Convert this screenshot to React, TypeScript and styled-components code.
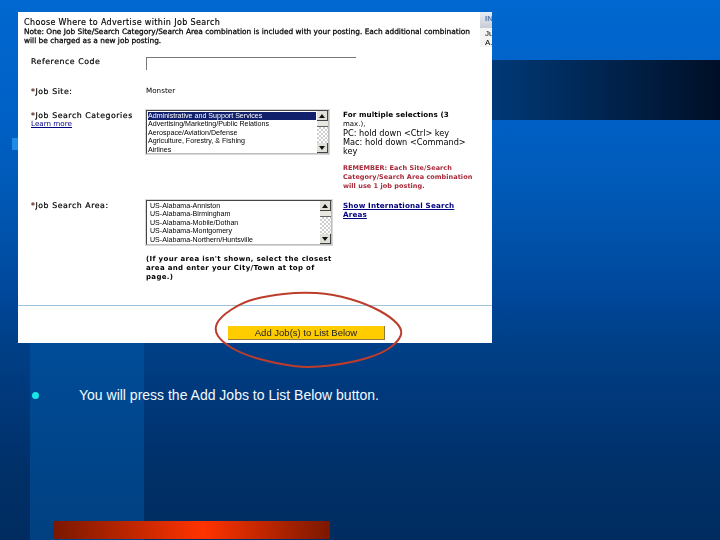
import React from "react";
import styled, { createGlobalStyle } from "styled-components";

const Global = createGlobalStyle`
  html, body { margin: 0; padding: 0; background: #003a78; }
`;

const Slide = styled.div`
  position: relative;
  width: 720px;
  height: 540px;
  overflow: hidden;
  padding: 12px 0 0 18px;
  box-sizing: border-box;
  background: linear-gradient(180deg, #0068d0 0%, #0060c6 22%, #0058b4 37%, #00479a 55%, #004088 63%, #00387a 74%, #003068 87%, #002c60 100%);
  font-family: "Liberation Sans", Arial, sans-serif;
`;

const Column = styled.div`
  position: absolute;
  left: 30px;
  top: 200px;
  bottom: 0;
  width: 114px;
  background: linear-gradient(180deg, #0056ac 0%, #004c98 42%, #004080 100%);
`;

const Band = styled.div`
  position: absolute;
  left: 144px;
  right: 0;
  top: 60px;
  height: 60px;
  background: linear-gradient(90deg, #0058b0 0%, #003a78 60%, #000f26 100%);
`;

const Square = styled.div`
  position: absolute;
  left: 12px;
  top: 138px;
  width: 8px;
  height: 12px;
  background: #1c8ce6;
`;

const Panel = styled.div`
  position: relative;
  width: 474px;
  height: 331px;
  background: #fff;
  overflow: hidden;
  color: #000;
  font-family: "DejaVu Sans", Verdana, sans-serif;
  font-size: 7.6px;
  line-height: 9px;
  filter: blur(0.35px);
`;

const Header = styled.div`
  height: 44px;
  box-sizing: border-box;
  padding: 6px 6px 0 6px;
`;

const Title = styled.div`
  font-size: 8px;
  letter-spacing: 0.36px;
  -webkit-text-stroke: 0.15px #000;
  white-space: nowrap;
`;

const Note = styled.div`
  font-size: 7.4px;
  -webkit-text-stroke: 0.25px #000;
  white-space: nowrap;
`;

const Row = styled.div<{ $height: number }>`
  display: grid;
  grid-template-columns: 128px 197px 1fr;
  height: ${(p) => p.$height}px;
`;

const Label = styled.div`
  padding: 1px 0 0 13px;
  font-size: 7.8px;
  letter-spacing: 0.55px;
  -webkit-text-stroke: 0.2px #000;
  white-space: nowrap;
`;

const Star = styled.span`
  color: #b01818;
`;

const Anchor = styled.span`
  color: #000080;
  text-decoration: underline;
  -webkit-text-stroke: 0;
`;

const LearnLink = styled(Anchor)`
  font-size: 7.2px;
  letter-spacing: 0;
  position: relative;
  top: -1px;
`;

const BlockLink = styled(Anchor)`
  display: block;
  align-self: start;
  width: 118px;
  padding-top: 1px;
  font-weight: 700;
  font-size: 7.2px;
  letter-spacing: 0.15px;
`;

const TextInput = styled.div`
  width: 210px;
  height: 13px;
  margin-top: 1px;
  box-sizing: border-box;
  border-top: 1px solid #777;
  border-left: 1px solid #777;
`;

const Plain = styled.div`
  font-size: 7.2px;
`;

const ListBox = styled.div<{ $width: number; $height: number }>`
  display: flex;
  width: ${(p) => p.$width}px;
  height: ${(p) => p.$height}px;
  box-sizing: border-box;
  border: 1px solid #bdbdbd;
  border-top-color: #444;
  border-left-color: #444;
  box-shadow: 0 0 0 1px #d8d8d8;
`;

const Options = styled.div<{ $inset: number }>`
  flex: 1;
  min-width: 0;
  overflow: hidden;
  padding: 1px 0 0 ${(p) => p.$inset}px;
`;

const Option = styled.div<{ $selected?: boolean }>`
  height: 8.4px;
  line-height: 8.4px;
  font-family: "Liberation Sans", Arial, sans-serif;
  font-size: 7.1px;
  white-space: nowrap;
  background: ${(p) => (p.$selected ? "#10206a" : "transparent")};
  color: ${(p) => (p.$selected ? "#fff" : "#000")};
  margin-right: 1px;
`;

const ScrollBar = styled.div`
  display: flex;
  flex-direction: column;
  width: 11px;
  background: repeating-conic-gradient(#cfcfcf 0 25%, #fff 0 50%) 0 0 / 4px 4px;
`;

const ScrollButton = styled.div`
  display: flex;
  align-items: center;
  justify-content: center;
  height: 10px;
  flex: none;
  box-sizing: border-box;
  background: #e0e0d8;
  border-right: 1px solid #444;
  border-bottom: 1px solid #444;
  svg { display: block; }
`;

const Thumb = styled.div`
  height: 6px;
  flex: none;
  box-sizing: border-box;
  background: #e8e8e0;
  border-bottom: 1px solid #666;
`;

const Spacer = styled.div`
  flex: 1;
`;

const Hint = styled.div`
  margin-top: 10px;
  width: 195px;
  font-weight: 700;
  font-size: 7px;
  letter-spacing: 0.33px;
  white-space: nowrap;
`;

const Side = styled.div`
  font-size: 8.2px;
  width: 131px;
`;

const SideTitle = styled.span`
  font-weight: 700;
  font-size: 7.2px;
  letter-spacing: 0.1px;
`;

const Small = styled.span`
  font-size: 7px;
`;

const Reminder = styled.div`
  margin-top: 8px;
  color: #a82a3a;
  font-weight: 700;
  font-size: 6.5px;
  letter-spacing: 0.05px;
`;

const Divider = styled.div`
  height: 1px;
  margin-top: 12px;
  background: #9cc4dc;
`;

const ButtonRow = styled.div`
  padding: 20px 0 0 210px;
`;

const AddButton = styled.div`
  width: 157px;
  height: 14px;
  box-sizing: border-box;
  background: #ffcc00;
  border-right: 1px solid #8a7a40;
  border-bottom: 1px solid #8a7a40;
  text-align: center;
  font-family: "Liberation Sans", Arial, sans-serif;
  font-size: 9.5px;
  line-height: 13px;
  color: #222;
`;

const Sliver = styled.div`
  position: absolute;
  right: 0;
  top: 0;
  width: 12px;
  height: 35px;
  background: #f4f4f4;
  font-family: "Liberation Sans", Arial, sans-serif;
  font-size: 8px;
  overflow: hidden;
  white-space: nowrap;
`;

const SliverHead = styled.div`
  height: 16px;
  margin-bottom: 1px;
  padding-left: 5px;
  line-height: 14px;
  font-size: 8px;
  font-weight: 700;
  color: #5a78b0;
  background: linear-gradient(180deg, #e8ecf4, #c8ccd4);
`;

const SliverLine = styled.div`
  padding-left: 5px;
  line-height: 9px;
`;

const Circle = styled.svg`
  position: absolute;
  left: 212px;
  top: 290px;
  width: 196px;
  height: 80px;
`;

const Bullet = styled.div`
  display: flex;
  align-items: center;
  height: 16px;
  margin: 44px 0 0 14px;
  position: relative;
  color: #f4faff;
  font-size: 14px;
`;

const Dot = styled.span`
  width: 7px;
  height: 7px;
  border-radius: 50%;
  background: #19e6e6;
  margin-right: 40px;
  flex: none;
`;

const RedBar = styled.div`
  position: relative;
  width: 276px;
  height: 18px;
  margin: 118px 0 0 36px;
  background: linear-gradient(90deg, #7a1800 0%, #ff3300 54%, #7a1800 100%);
`;

const Arrow = ({ down }: { down?: boolean }) => (
  <svg width="6" height="4" viewBox="0 0 6 4">
    <path d={down ? "M0 0H6L3 4Z" : "M0 4H6L3 0Z"} fill="#111" />
  </svg>
);

const Scroller = () => (
  <ScrollBar>
    <ScrollButton><Arrow /></ScrollButton>
    <Thumb />
    <Spacer />
    <ScrollButton><Arrow down /></ScrollButton>
  </ScrollBar>
);

const categories = [
  "Administrative and Support Services",
  "Advertising/Marketing/Public Relations",
  "Aerospace/Aviation/Defense",
  "Agriculture, Forestry, & Fishing",
  "Airlines",
];

const areas = [
  "US-Alabama-Anniston",
  "US-Alabama-Birmingham",
  "US-Alabama-Mobile/Dothan",
  "US-Alabama-Montgomery",
  "US-Alabama-Northern/Huntsville",
];

const ringPoints: [number, number][] = [
  [8, 27], [31, 12], [55, 6], [88, 2], [121, 4], [155, 14], [179, 27], [191, 40],
  [186, 52], [169, 64], [138, 73], [98, 78], [65, 74], [30, 64], [10, 52], [2, 40],
];

const ringPath = () => {
  const mid = (a: [number, number], b: [number, number]) =>
    `${(a[0] + b[0]) / 2} ${(a[1] + b[1]) / 2}`;
  const n = ringPoints.length;
  let d = `M${mid(ringPoints[n - 1], ringPoints[0])}`;
  ringPoints.forEach((p, i) => {
    d += ` Q${p[0]} ${p[1]} ${mid(p, ringPoints[(i + 1) % n])}`;
  });
  return d + "Z";
};

export default function App() {
  return (
    <>
      <Global />
      <Slide>
        <Column />
        <Band />
        <Square />
        <Panel>
          <Header>
            <Title>Choose Where to Advertise within Job Search</Title>
            <Note>
              Note: One Job Site/Search Category/Search Area combination is included with your posting. Each additional combination
              <br />
              will be charged as a new job posting.
            </Note>
          </Header>
          <Row $height={30}>
            <Label>Reference Code</Label>
            <TextInput />
            <div />
          </Row>
          <Row $height={24}>
            <Label><Star>*</Star>Job Site:</Label>
            <Plain>Monster</Plain>
            <div />
          </Row>
          <Row $height={90}>
            <Label>
              <Star>*</Star>Job Search Categories
              <br />
              <LearnLink>Learn more</LearnLink>
            </Label>
            <div>
              <ListBox $width={183} $height={44}>
                <Options $inset={1}>
                  {categories.map((c, i) => (
                    <Option key={c} $selected={i === 0}>{c}</Option>
                  ))}
                </Options>
                <Scroller />
              </ListBox>
            </div>
            <Side>
              <SideTitle>For multiple selections (3</SideTitle>
              <br />
              <Small>max.),</Small>
              <br />
              PC: hold down &lt;Ctrl&gt; key
              <br />
              Mac: hold down &lt;Command&gt;
              <br />
              key
              <Reminder>
                REMEMBER: Each Site/Search
                <br />
                Category/Search Area combination
                <br />
                will use 1 job posting.
              </Reminder>
            </Side>
          </Row>
          <Row $height={93}>
            <Label><Star>*</Star>Job Search Area:</Label>
            <div>
              <ListBox $width={186} $height={45}>
                <Options $inset={3}>
                  {areas.map((a) => (
                    <Option key={a}>{a}</Option>
                  ))}
                </Options>
                <Scroller />
              </ListBox>
              <Hint>
                (If your area isn't shown, select the closest
                <br />
                area and enter your City/Town at top of
                <br />
                page.)
              </Hint>
            </div>
            <BlockLink>Show International Search Areas</BlockLink>
          </Row>
          <Divider />
          <ButtonRow>
            <AddButton>Add Job(s) to List Below</AddButton>
          </ButtonRow>
          <Sliver>
            <SliverHead>IN</SliverHead>
            <SliverLine>Ju</SliverLine>
            <SliverLine>A.</SliverLine>
          </Sliver>
        </Panel>
        <Bullet>
          <Dot />
          You will press the Add Jobs to List Below button.
        </Bullet>
        <RedBar />
        <Circle viewBox="0 0 196 80">
          <path d={ringPath()} fill="none" stroke="#bd3d2c" strokeWidth="2" />
        </Circle>
      </Slide>
    </>
  );
}
